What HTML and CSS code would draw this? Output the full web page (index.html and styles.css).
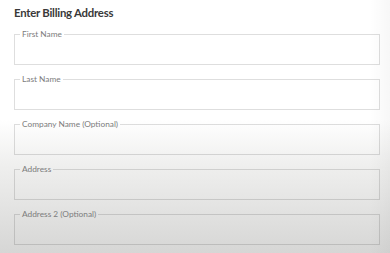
FILE: index.html
```html
<!DOCTYPE html>
<html lang="en">
<head>
<meta charset="utf-8">
<title>Enter Billing Address</title>
<link rel="stylesheet" href="styles.css">
</head>
<body>
<main class="page">
  <h1 class="title">Enter Billing Address</h1>
  <form class="form">
    <fieldset class="field"><legend class="legend">First Name</legend><input class="input" type="text" aria-label="First Name"></fieldset>
    <fieldset class="field"><legend class="legend">Last Name</legend><input class="input" type="text" aria-label="Last Name"></fieldset>
    <fieldset class="field"><legend class="legend">Company Name (Optional)</legend><input class="input" type="text" aria-label="Company Name"></fieldset>
    <fieldset class="field"><legend class="legend">Address</legend><input class="input" type="text" aria-label="Address"></fieldset>
    <fieldset class="field"><legend class="legend">Address 2 (Optional)</legend><input class="input" type="text" aria-label="Address 2"></fieldset>
  </form>
</main>
</body>
</html>
```

FILE: styles.css
```css
html, body {
  margin: 0;
  height: 100%;
}
body {
  font-family: Lato, "Open Sans", "Liberation Sans", sans-serif;
  background:
    linear-gradient(to right, rgba(0,0,0,0) 0, rgba(0,0,0,0) 370px, rgba(0,0,0,0.03) 390px),
    linear-gradient(to bottom, #ffffff 0, #ffffff 120px, #efefee 165px, #e4e4e3 205px, #d6d6d5 253px);
  overflow: hidden;
}
.page {
  padding: 5px 10px 0 14px;
}
.title {
  margin: 0;
  font-size: 11.4px;
  letter-spacing: -0.25px;
  line-height: 16px;
  font-weight: 700;
  color: #393939;
}
.form {
  margin-top: 9px;
  display: flex;
  flex-direction: column;
  gap: 10px;
}
.field {
  margin: 0;
  padding: 0 5px;
  border: 1px solid rgba(0, 0, 0, 0.13);
  height: 35px;
  box-sizing: border-box;
  min-width: 0;
}
.legend {
  padding: 0 2px;
  font-size: 8.3px;
  line-height: 8px;
  color: #7c7c7c;
}
.input {
  border: 0;
  background: transparent;
  outline: none;
  width: 100%;
  height: 18px;
  padding: 0;
  font: inherit;
}
```
